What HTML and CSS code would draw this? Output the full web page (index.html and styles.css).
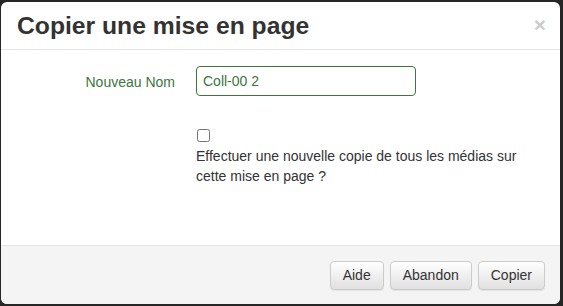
FILE: index.html
```html
<!DOCTYPE html>
<html>
<head>
  <meta charset="UTF-8">
  <title>Copier une mise en page</title>
  <link rel="stylesheet" href="styles.css">
</head>
<body>
  <div class="modal">
    <div class="modal-header">
      <h4 class="modal-title">Copier une mise en page</h4>
      <span class="close">&times;</span>
    </div>

    <div class="modal-body">
      <div class="form-row">
        <label class="form-label" for="newName">Nouveau Nom</label>
        <input class="form-input" id="newName" type="text" value="Coll-00 2">
      </div>
      <div class="form-row check-row">
        <div></div>
        <div>
          <input class="check" id="copyMedia" type="checkbox">
          <label class="check-label" for="copyMedia">Effectuer une nouvelle copie de tous les médias sur cette mise en page ?</label>
        </div>
      </div>
    </div>

    <div class="modal-footer">
      <button class="btn">Aide</button>
      <button class="btn">Abandon</button>
      <button class="btn">Copier</button>
    </div>
  </div>
</body>
</html>
```

FILE: styles.css
```css
html, body { height: 100%; }
body { margin: 0; background: #262626; font-family: "Liberation Sans", Arial, sans-serif; font-size: 14px; color: #333; padding: 2px 3px 2px 1px; box-sizing: border-box; }

.modal { background: #fff; border-radius: 6px; height: 302px; display: flex; flex-direction: column; overflow: hidden; }

.modal-header { height: 47px; border-bottom: 1px solid #e5e5e5; display: flex; align-items: center; justify-content: space-between; padding: 0 14px 0 16px; }
.modal-title { margin: 0; font-size: 24.7px; font-weight: bold; line-height: 28px; color: #333; }
.close { font-size: 21px; font-weight: bold; color: #000; opacity: .2; line-height: 1; margin-top: -2px; }

.modal-body { flex: 1; padding: 16px 15px 0 0; }
.form-row { display: grid; grid-template-columns: 174px 220px; column-gap: 21px; align-items: center; }
.form-label { text-align: right; color: #3c763d; padding-top: 1px; }
.form-input { box-sizing: border-box; height: 30px; width: 220px; border: 1px solid #3c763d; border-radius: 4px; padding: 0 6px; font: inherit; color: #3c763d; outline: none; }

.check-row { grid-template-columns: 174px 350px; margin-top: 33px; align-items: start; }
.check { display: block; margin: 0 0 4px 1px; width: 13px; height: 13px; }
.check-label { display: block; line-height: 20px; color: #333; }

.modal-footer { height: 58px; border-top: 1px solid #e5e5e5; background: #f4f4f4; display: flex; justify-content: flex-end; align-items: center; gap: 6px; padding: 0 15px; }
.btn { height: 29px; padding: 0 12px; font: inherit; color: #333; border: 1px solid #ccc; border-radius: 4px; background: linear-gradient(#fff, #e0e0e0); box-shadow: inset 0 1px 0 rgba(255,255,255,.15), 0 1px 1px rgba(0,0,0,.075); }
```
